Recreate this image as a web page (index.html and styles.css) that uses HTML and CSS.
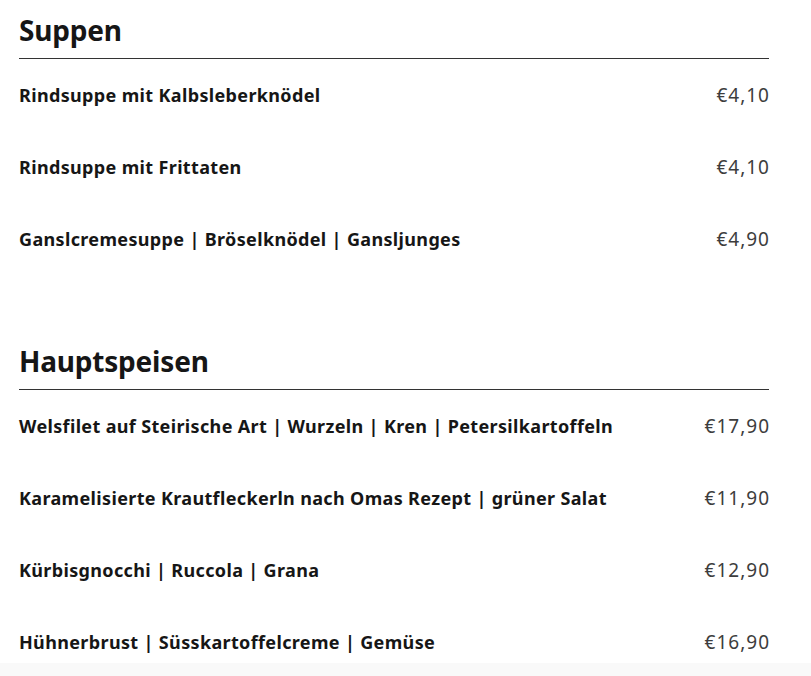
FILE: index.html
```html
<!DOCTYPE html>
<html lang="de">
<head>
    <meta charset="UTF-8">
    <meta name="viewport" content="width=device-width, initial-scale=1.0">
    <title>Speisekarte</title>
    <link rel="stylesheet" href="styles.css">
</head>
<body>
    <div class="menu">
        <section class="menu-section">
            <h2>Suppen</h2>
            <div class="menu-item">
                <span class="dish">Rindsuppe mit Kalbsleberknödel</span>
                <span class="price">€4,10</span>
            </div>
            <div class="menu-item">
                <span class="dish">Rindsuppe mit Frittaten</span>
                <span class="price">€4,10</span>
            </div>
            <div class="menu-item">
                <span class="dish">Ganslcremesuppe | Bröselknödel | Gansljunges</span>
                <span class="price">€4,90</span>
            </div>
        </section>

        <section class="menu-section">
            <h2>Hauptspeisen</h2>
            <div class="menu-item">
                <span class="dish">Welsfilet auf Steirische Art | Wurzeln | Kren | Petersilkartoffeln</span>
                <span class="price">€17,90</span>
            </div>
            <div class="menu-item">
                <span class="dish">Karamelisierte Krautfleckerln nach Omas Rezept | grüner Salat</span>
                <span class="price">€11,90</span>
            </div>
            <div class="menu-item">
                <span class="dish">Kürbisgnocchi | Ruccola | Grana</span>
                <span class="price">€12,90</span>
            </div>
            <div class="menu-item">
                <span class="dish">Hühnerbrust | Süsskartoffelcreme | Gemüse</span>
                <span class="price">€16,90</span>
            </div>
        </section>
    </div>

    <div class="bottom-bar"></div>
</body>
</html>
```

FILE: styles.css
```css
* {
    margin: 0;
    padding: 0;
    box-sizing: border-box;
}

body {
    font-family: "Noto Sans", "Liberation Sans", sans-serif;
    background-color: #fff;
    color: #161616;
}

.menu {
    width: 750px;
    margin-left: 19px;
    padding-top: 12px;
}

.menu-section + .menu-section {
    margin-top: 68px;
}

/* Section heading */
.menu-section h2 {
    font-size: 28px;
    font-weight: 700;
    line-height: 36px;
    padding-bottom: 10px;
    border-bottom: 1px solid #333;
    letter-spacing: -0.2px;
}

/* Dish rows */
.menu-item {
    display: flex;
    justify-content: space-between;
    align-items: center;
    padding: 24px 0;
    line-height: 24px;
    font-size: 18px;
}

.menu-item .dish {
    font-weight: 700;
    letter-spacing: 0.35px;
}

.menu-item .price {
    font-weight: 400;
    font-size: 19px;
    letter-spacing: 1px;
    margin-right: -1px;
    color: #3d3d3d;
}

.bottom-bar {
    position: fixed;
    left: 0;
    right: 0;
    bottom: 0;
    height: 13px;
    background-color: #f9f9f9;
}
```
